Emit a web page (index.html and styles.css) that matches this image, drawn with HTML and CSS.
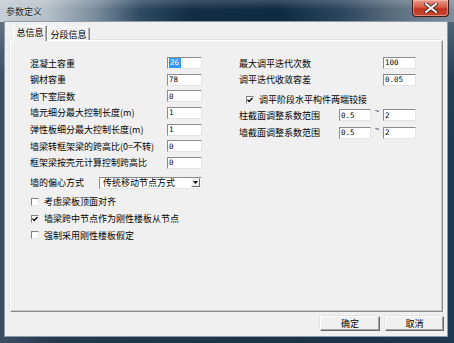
FILE: index.html
```html
<!DOCTYPE html>
<html lang="zh-CN">
<head>
<meta charset="utf-8">
<title>参数定义</title>
<link rel="stylesheet" href="styles.css">
</head>
<body>
<div class="window">
  <div class="titlebar">
    <span class="title">参数定义</span>
    <div class="close">
      <svg width="14" height="10" viewBox="0 0 14 10">
        <path d="M2 1 L12 9 M12 1 L2 9" stroke="#3a1a14" stroke-width="3.6" stroke-linecap="square"/>
        <path d="M2 1 L12 9 M12 1 L2 9" stroke="#ffffff" stroke-width="2" stroke-linecap="square"/>
      </svg>
    </div>
  </div>
  <div class="client">
    <div class="tabs">
      <div class="tab active">总信息</div>
      <div class="tab inactive">分段信息</div>
    </div>
    <div class="panel">
      <div class="col left">
        <div class="row"><span class="lbl">混凝土容重</span><span class="input w35"><span class="sel">26</span></span></div>
        <div class="row"><span class="lbl">钢材容重</span><span class="input w35">78</span></div>
        <div class="row"><span class="lbl">地下室层数</span><span class="input w35">0</span></div>
        <div class="row"><span class="lbl">墙元细分最大控制长度(m)</span><span class="input w35">1</span></div>
        <div class="row"><span class="lbl">弹性板细分最大控制长度(m)</span><span class="input w35">1</span></div>
        <div class="row"><span class="lbl">墙梁转框架梁的跨高比(0=不转)</span><span class="input w35">0</span></div>
        <div class="row"><span class="lbl">框架梁按壳元计算控制跨高比</span><span class="input w35">0</span></div>
        <div class="row selrow"><span class="lbl">墙的偏心方式</span>
          <div class="select"><span class="seltext">传统移动节点方式</span>
            <span class="dd"><svg width="5" height="3" viewBox="0 0 5 3"><path d="M0 0 H5 L2.5 3 Z" fill="#000"/></svg></span>
          </div>
        </div>
        <div class="row chk first"><span class="box"></span><span>考虑梁板顶面对齐</span></div>
        <div class="row chk"><span class="box"><svg width="6" height="6" viewBox="0 0 6 6"><path d="M0.5 2.8 L2.2 4.5 L5.5 1" stroke="#000" stroke-width="1.3" fill="none"/></svg></span><span>墙梁跨中节点作为刚性楼板从节点</span></div>
        <div class="row chk"><span class="box"></span><span>强制采用刚性楼板假定</span></div>
      </div>
      <div class="col right">
        <div class="row"><span class="lbl">最大调平迭代次数</span><span class="input w33">100</span></div>
        <div class="row"><span class="lbl">调平迭代收敛容差</span><span class="input w33">0.05</span></div>
        <div class="row chk rchk"><span class="box"><svg width="6" height="6" viewBox="0 0 6 6"><path d="M0.5 2.8 L2.2 4.5 L5.5 1" stroke="#000" stroke-width="1.3" fill="none"/></svg></span><span>调平阶段水平构件两端铰接</span></div>
        <div class="row range first"><span class="lbl">柱截面调整系数范围</span><span class="pair"><span class="input w32">0.5</span><span class="tilde">~</span><span class="input w33">2</span></span></div>
        <div class="row range"><span class="lbl">墙截面调整系数范围</span><span class="pair"><span class="input w32">0.5</span><span class="tilde">~</span><span class="input w33">2</span></span></div>
      </div>
    </div>
    <div class="buttons">
      <div class="btn ok">确定</div>
      <div class="btn">取消</div>
    </div>
  </div>
</div>
</body>
</html>
```

FILE: styles.css
```css
* { box-sizing: border-box; margin: 0; padding: 0; }
html, body { width: 454px; height: 343px; overflow: hidden; }
body {
  font-family: "Noto Sans CJK SC", "Noto Sans", sans-serif;
  font-size: 9px;
  line-height: 1;
  color: #000;
  background: #ffffff;
}
.window {
  width: 454px;
  height: 343px;
  display: flex;
  flex-direction: column;
  background:
    linear-gradient(180deg, rgba(150,165,178,0.55) 0px, rgba(60,80,100,0.2) 80px, rgba(0,0,0,0) 140px),
    linear-gradient(90deg, #3b4f62 0px, #22384e 60px, #1b3248 300px, #1d3850 454px);
}
.titlebar {
  height: 22px;
  flex: none;
  display: flex;
  justify-content: space-between;
  align-items: flex-start;
  background:
    linear-gradient(180deg, rgba(255,255,255,0.18) 0px, rgba(255,255,255,0) 10px),
    linear-gradient(90deg, #c6cdd3 0px, #b7c1c9 45px, #7a8d9e 95px, #2f4a63 140px, #132d46 190px, #0f2a43 280px, #2a455d 340px, #5b6e80 395px, #7f8f9d 454px);
}
.title {
  margin: 7px 0 0 6px;
  font-size: 9px;
  color: #1b1f24;
  text-shadow: 0 0 3px rgba(255,255,255,0.8);
}
.close {
  width: 37px;
  height: 17px;
  margin-right: 5px;
  border: 1px solid #3d1c18;
  border-top: none;
  border-radius: 0 0 4px 4px;
  background: linear-gradient(180deg, #e79a8a 0%, #d65a45 45%, #c0331f 55%, #c74a33 100%);
  box-shadow: inset 0 0 0 1px rgba(255,210,200,0.45);
  display: flex;
  align-items: center;
  justify-content: center;
}
.client {
  flex: 1;
  margin: 0 7px 7px 5px;
  background: #f0f0f0;
  box-shadow: 0 0 0 1px #8d9cab;
  display: flex;
  flex-direction: column;
  padding: 3px 4px 0 5px;
}
.tabs {
  height: 15px;
  display: flex;
  align-items: flex-end;
  padding-left: 3px;
  position: relative;
  z-index: 1;
}
.tab {
  height: 13px;
  display: flex;
  align-items: center;
  justify-content: center;
  white-space: nowrap;
  border-top: 1px solid #ffffff;
  border-left: 1px solid #ffffff;
  border-right: 1px solid #8c8c8c;
  box-shadow: inset -1px 0 0 #b5b5b5;
  background: #f0f0f0;
}
.tab.active {
  height: 16px;
  margin-bottom: -1px;
  width: 34px;
  padding-bottom: 2px;
}
.tab.inactive { width: 43px; }
.panel {
  height: 272px;
  border-top: 1px solid #ffffff;
  border-left: 1px solid #ffffff;
  border-right: 1px solid #8c8c8c;
  border-bottom: 1px solid #8c8c8c;
  box-shadow: inset -1px -1px 0 #c8c8c8, -1px -1px 0 #e3e3e3;
  display: flex;
  padding: 16px 0 0 19px;
}
.col { display: flex; flex-direction: column; gap: 4.67px; }
.col.left { width: 172px; }
.col.right { width: 177px; margin-left: 37px; }
.row {
  height: 12px;
  display: flex;
  align-items: center;
  justify-content: space-between;
  white-space: nowrap;
}
.input {
  height: 12px;
  background: #ffffff;
  border-top: 1px solid #8a8a8a;
  border-left: 1px solid #8a8a8a;
  border-right: 1px solid #e4e4e4;
  border-bottom: 1px solid #e4e4e4;
  font-family: "DejaVu Sans Mono", "Liberation Mono", monospace;
  font-size: 7.5px;
  display: flex;
  align-items: center;
  padding-left: 1px;
}
.w35 { width: 35px; }
.w33 { width: 33px; }
.w32 { width: 32px; }
.sel { background: #3399ff; color: #ffffff; padding: 1px 0 1px 1px; width: 12px; }
.selrow { margin-top: 3.3px; justify-content: flex-start; }
.selrow .lbl { width: 69px; }
.select {
  width: 103px;
  height: 12px;
  background: #fff;
  border-top: 1px solid #8a8a8a;
  border-left: 1px solid #8a8a8a;
  border-right: 1px solid #e4e4e4;
  border-bottom: 1px solid #e4e4e4;
  display: flex;
  align-items: center;
  justify-content: space-between;
  padding: 0 1px 0 3px;
}
.dd {
  width: 9px;
  height: 9px;
  background: #f0f0f0;
  border-top: 1px solid #ffffff;
  border-left: 1px solid #ffffff;
  border-right: 1px solid #6a6a6a;
  border-bottom: 1px solid #6a6a6a;
  display: flex;
  align-items: center;
  justify-content: center;
}
.chk { justify-content: flex-start; gap: 5px; padding-left: 1px; }
.chk.first { margin-top: 2.3px; }
.box {
  width: 8px;
  height: 8px;
  background: #fff;
  border-top: 1px solid #808080;
  border-left: 1px solid #808080;
  border-right: 1px solid #e8e8e8;
  border-bottom: 1px solid #e8e8e8;
  display: flex;
  align-items: center;
  justify-content: center;
  flex: none;
}
.rchk { margin-top: 3.3px; padding-left: 7px; gap: 5px; }
.range.first { margin-top: -1px; }
.range + .range { margin-top: 1px; }
.pair { display: flex; align-items: center; }
.tilde { width: 12px; text-align: center; align-self: flex-start; margin-top: -2px; font-size: 8px; }
.buttons {
  display: flex;
  justify-content: flex-end;
  gap: 5px;
  margin-top: 4px;
  margin-right: -1px;
}
.btn {
  width: 60px;
  height: 15px;
  background: #f0f0f0;
  border-top: 1px solid #ffffff;
  border-left: 1px solid #ffffff;
  border-right: 1px solid #6a6a6a;
  border-bottom: 1px solid #6a6a6a;
  box-shadow: inset -1px -1px 0 #a0a0a0, -1px -1px 0 #e3e3e3;
  display: flex;
  align-items: center;
  justify-content: center;
}
.btn + .btn { width: 59px; }
```
